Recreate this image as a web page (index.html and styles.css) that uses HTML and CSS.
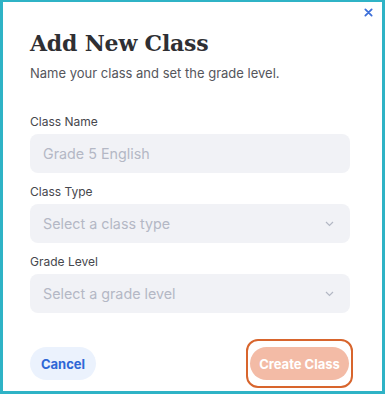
FILE: index.html
```html
<!DOCTYPE html>
<html lang="en">
  <head>
    <meta charset="UTF-8" />
    <meta name="viewport" content="width=device-width, initial-scale=1.0" />
    <title>Add New Class</title>
    <link rel="stylesheet" href="styles.css">
  </head>
  <body>
    <div class="dialog">
      <button class="close" aria-label="Close">
        <svg width="9" height="9" viewBox="0 0 10 10">
          <path d="M1.5 1.5 L8.5 8.5 M8.5 1.5 L1.5 8.5" stroke="#3d6fd9" stroke-width="2" stroke-linecap="round" />
        </svg>
      </button>

      <h1>Add New Class</h1>
      <p class="sub">Name your class and set the grade level.</p>

      <div class="field">
        <label>Class Name</label>
        <div class="input">Grade 5 English</div>
      </div>

      <div class="field">
        <label>Class Type</label>
        <div class="input select">
          <span>Select a class type</span>
          <svg width="9" height="6" viewBox="0 0 9 6">
            <path d="M1 1 L4.5 4.5 L8 1" fill="none" stroke="#b3b8c4" stroke-width="1.2" />
          </svg>
        </div>
      </div>

      <div class="field">
        <label>Grade Level</label>
        <div class="input select">
          <span>Select a grade level</span>
          <svg width="9" height="6" viewBox="0 0 9 6">
            <path d="M1 1 L4.5 4.5 L8 1" fill="none" stroke="#b3b8c4" stroke-width="1.2" />
          </svg>
        </div>
      </div>

      <div class="actions">
        <button class="btn cancel">Cancel</button>
        <div class="focus-ring">
          <button class="btn create">Create Class</button>
        </div>
      </div>
    </div>
  </body>
</html>
```

FILE: styles.css
```css
* {
  padding: 0;
  margin: 0;
  box-sizing: border-box;
}

body {
  width: 385px;
  height: 394px;
  font-family: "Inter", "Liberation Sans", sans-serif;
  background: #ffffff;
}

.dialog {
  position: relative;
  width: 385px;
  height: 394px;
  border: 3px solid #2fb3c6;
  border-top-width: 2px;
  padding: 26px 32px 0 27px;
  display: flex;
  flex-direction: column;
}

.close {
  position: absolute;
  top: 6px;
  right: 9px;
  border: none;
  background: none;
  display: flex;
}

h1 {
  font-family: "DejaVu Serif", serif;
  font-size: 22px;
  font-weight: 700;
  color: #2f2f33;
  letter-spacing: -0.2px;
  line-height: 30px;
}

.sub {
  margin-top: 6px;
  font-size: 13px;
  color: #55565c;
  line-height: 18px;
}

.field {
  display: flex;
  flex-direction: column;
  gap: 4px;
}

.field:first-of-type {
  margin-top: 31px;
}

.field + .field {
  margin-top: 10px;
}

label {
  font-size: 12px;
  color: #46474d;
  line-height: 17px;
}

.input {
  height: 39px;
  background: #f1f2f6;
  border-radius: 8px;
  padding: 0 13px;
  display: flex;
  align-items: center;
  font-size: 14.3px;
  color: #b4b8c5;
}

.select {
  justify-content: space-between;
  padding-right: 16px;
}

.actions {
  margin-top: 26px;
  display: flex;
  justify-content: space-between;
  align-items: center;
}

.btn {
  height: 33px;
  border: none;
  border-radius: 17px;
  font-family: "Inter", "Liberation Sans", sans-serif;
  font-size: 13px;
  font-weight: 700;
}

.cancel {
  width: 66px;
  background: #ebf2fd;
  color: #2f67d6;
}

.focus-ring {
  border: 2px solid #d8652d;
  border-radius: 12px;
  padding: 6px 2px;
  margin-right: -3px;
}

.create {
  width: 99px;
  background: #f3bba6;
  color: #ffffff;
}
```
